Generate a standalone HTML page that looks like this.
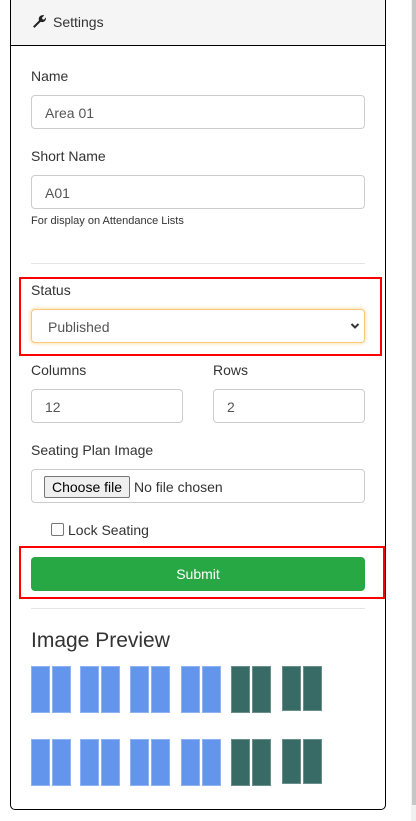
<!DOCTYPE html>
<html><head><meta charset="utf-8"><style>
*{box-sizing:border-box;margin:0;padding:0}
body{width:416px;height:821px;background:#fff;font-family:"Liberation Sans",Arial,sans-serif;font-size:14px;color:#333;position:relative;overflow:hidden}
.a{position:absolute}
.card{left:10px;top:-5px;width:376px;height:815px;border:1px solid #000;border-radius:5px;overflow:hidden}
.hdr{left:0;top:0;width:100%;height:50px;background:#f5f5f5;border-bottom:1px solid #000}
.lbl{font-size:14px;color:#333;line-height:16px}
.inp{border:1px solid #ccc;border-radius:4px;height:34px;padding-left:13px;line-height:34px;color:#555;font-size:14px}
.hr{height:1px;background:#e5e5e5;left:31px;width:334px}
.red{border:2px solid #f00}
.s{position:absolute;width:19px;height:47px;background:#6495ed;border:1px solid #8fb2f0}
.g{background:#386b66;border-color:#6b8f8b}
</style></head><body>
<div class="a" style="left:411px;top:0;width:5px;height:821px;background:#f1f1f1"></div>
<div class="a" style="left:412px;top:0;width:4px;height:805px;background:#c6c6c6"></div>
<div class="a card"><div class="a hdr"></div></div>
<svg class="a" style="left:32px;top:14px" width="14" height="14" viewBox="0 0 14 14"><path d="M1 12.5 L7 6.5 C6.3 4.5 7 2.5 8.8 1.6 C10 1 11.3 1 12.3 1.5 L10 3.6 L10.4 5.2 L12 5.6 L14 3.4 C14.3 5 13.6 6.7 12 7.6 C10.9 8.2 9.6 8.3 8.5 7.9 L2.5 13.9 Z" fill="#222"/></svg>
<div class="a lbl" style="left:53px;top:14px">Settings</div>
<div class="a lbl" style="left:31px;top:68px">Name</div>
<div class="a inp" style="left:31px;top:95px;width:334px">Area 01</div>
<div class="a lbl" style="left:31px;top:148px">Short Name</div>
<div class="a inp" style="left:31px;top:175px;width:334px">A01</div>
<div class="a" style="left:31px;top:215px;font-size:11px;color:#333">For display on Attendance Lists</div>
<div class="a hr" style="top:263px"></div>
<div class="a red" style="left:19px;top:277px;width:363px;height:79px"></div>
<div class="a lbl" style="left:31px;top:282px">Status</div>
<div class="a inp" style="left:31px;top:309px;width:334px;border-color:#f9c97a;box-shadow:0 0 3px 1px #fde2b2;padding-left:16px">Published</div>
<svg class="a" style="left:350px;top:322px" width="10" height="8" viewBox="0 0 10 8"><path d="M1.5 2 L5 5.5 L8.5 2" stroke="#333" stroke-width="2" fill="none"/></svg>
<div class="a lbl" style="left:31px;top:362px">Columns</div>
<div class="a lbl" style="left:213px;top:362px">Rows</div>
<div class="a inp" style="left:31px;top:389px;width:152px">12</div>
<div class="a inp" style="left:213px;top:389px;width:152px">2</div>
<div class="a lbl" style="left:31px;top:442px">Seating Plan Image</div>
<div class="a inp" style="left:31px;top:469px;width:334px"></div>
<div class="a" style="left:44px;top:476px;width:86px;height:22px;background:#efefef;border:1px solid #767676;border-radius:2px;font-size:14px;line-height:20px;text-align:center;color:#000">Choose file</div>
<div class="a" style="left:134px;top:479px;font-size:14px;color:#333">No file chosen</div>
<div class="a" style="left:51px;top:523px;width:13px;height:13px;border:1px solid #767676;border-radius:2px;background:#fff"></div>
<div class="a lbl" style="left:68px;top:522px">Lock Seating</div>
<div class="a red" style="left:19px;top:546px;width:366px;height:53px"></div>
<div class="a" style="left:31px;top:557px;width:334px;height:34px;background:#28a745;border-radius:4px;color:#fff;text-align:center;line-height:34px;font-size:14px">Submit</div>
<div class="a hr" style="top:608px"></div>
<div class="a" style="left:31px;top:629px;font-size:21px;color:#333;line-height:24px">Image Preview</div>
<div class="a" style="left:0;top:666px">
<div class="s" style="left:31px"></div><div class="s" style="left:52px"></div>
<div class="s" style="left:80px"></div><div class="s" style="left:101px"></div>
<div class="s" style="left:130px"></div><div class="s" style="left:151px"></div>
<div class="s" style="left:181px"></div><div class="s" style="left:202px"></div>
<div class="s g" style="left:231px"></div><div class="s g" style="left:252px"></div>
<div class="s g" style="left:282px;height:45px"></div><div class="s g" style="left:303px;height:45px"></div>
</div>
<div class="a" style="left:0;top:739px">
<div class="s" style="left:31px"></div><div class="s" style="left:52px"></div>
<div class="s" style="left:80px"></div><div class="s" style="left:101px"></div>
<div class="s" style="left:130px"></div><div class="s" style="left:151px"></div>
<div class="s" style="left:181px"></div><div class="s" style="left:202px"></div>
<div class="s g" style="left:231px"></div><div class="s g" style="left:252px"></div>
<div class="s g" style="left:282px;height:45px"></div><div class="s g" style="left:303px;height:45px"></div>
</div>
</body></html>
